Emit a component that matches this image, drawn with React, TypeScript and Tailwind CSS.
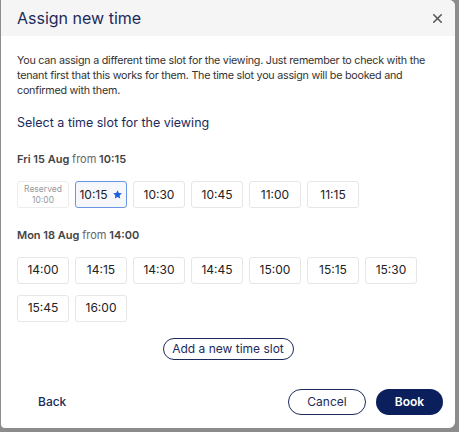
import { X } from 'lucide-react';

const friSlots = ['10:15', '10:30', '10:45', '11:00', '11:15'];
const monSlots = ['14:00', '14:15', '14:30', '14:45', '15:00', '15:15', '15:30', '15:45', '16:00'];

const Star = () => (
	<svg viewBox="0 0 24 24" className="h-[11px] w-[11px]" fill="#1e5fe0">
		<path d="M12 2.5l2.9 6.1 6.6.8-4.9 4.6 1.3 6.6L12 17.3l-5.9 3.3 1.3-6.6-4.9-4.6 6.6-.8z" />
	</svg>
);

const slotBase = 'flex h-[27px] w-[52px] items-center justify-center rounded-[3px] border';
const slotText = 'text-[12px] text-[#222]';

export default function App() {
	return (
		<div
			className="h-[432px] w-[459px] bg-[#8c8c8c] pl-px"
			style={{ fontFamily: 'Inter, "Noto Sans", sans-serif' }}
		>
			<div className="flex h-[428px] w-[454px] flex-col overflow-hidden rounded-r-[6px] rounded-bl-[4px] bg-white">
				{/* Header */}
				<div className="flex h-[36px] items-center justify-between bg-[#f5f5f5] pl-4 pr-[10px]">
					<h1 className="text-[16px] text-[#1c2b5c]">Assign new time</h1>
					<X className="h-[15px] w-[15px] text-[#555]" strokeWidth={2.5} />
				</div>

				{/* Body */}
				<div className="flex flex-1 flex-col px-4 pt-[17px]">
					<p className="text-[10.75px] leading-[15px] tracking-[-0.25px] text-[#333]">
						You can assign a different time slot for the viewing. Just remember to check with the
						tenant first that this works for them. The time slot you assign will be booked and
						confirmed with them.
					</p>
					<p className="mt-[16px] text-[12.5px] text-[#1c2b5c]">
						Select a time slot for the viewing
					</p>

					<p className="mt-[18px] text-[11px] font-semibold text-[#444]">
						Fri 15 Aug <span className="font-normal text-[#666]">from</span> 10:15
					</p>
					<div className="mt-[14px] flex flex-wrap gap-[6px]">
						<div
							className={`${slotBase} flex-col border-[#ececec] text-[8.5px] leading-[11px] text-[#9a9a9a]`}
						>
							<span>Reserved</span>
							<span>10:00</span>
						</div>
						{friSlots.map((s, i) => (
							<div
								key={s}
								className={
									i === 0
										? `${slotBase} ${slotText} gap-1 border-[#6a95e6] bg-[#f6f7fa]`
										: `${slotBase} ${slotText} border-[#e6e6e6]`
								}
							>
								{s}
								{i === 0 && <Star />}
							</div>
						))}
					</div>

					<p className="mt-[19px] text-[11px] font-semibold text-[#444]">
						Mon 18 Aug <span className="font-normal text-[#666]">from</span> 14:00
					</p>
					<div className="mt-[13px] flex flex-wrap gap-x-[6px] gap-y-[11px]">
						{monSlots.map((s) => (
							<div key={s} className={`${slotBase} ${slotText} border-[#e6e6e6]`}>
								{s}
							</div>
						))}
					</div>

					<div className="mt-[16px] flex justify-center">
						<button className="h-[22px] w-[131px] rounded-full border border-[#1c2b5c] text-[12px] text-[#1c2b5c]">
							Add a new time slot
						</button>
					</div>
				</div>

				{/* Footer */}
				<div className="flex items-center justify-between pb-[13px] pl-[21px] pr-[12px]">
					<button className="px-4 text-[12px] font-medium text-[#1c2b5c]">Back</button>
					<div className="flex gap-[10px]">
						<button className="h-[26px] w-[78px] rounded-full border border-[#1c2b5c] text-[12px] text-[#1c2b5c]">
							Cancel
						</button>
						<button className="h-[26px] w-[67px] rounded-full bg-[#0b1f5c] text-[12px] font-semibold text-white">
							Book
						</button>
					</div>
				</div>
			</div>
		</div>
	);
}
